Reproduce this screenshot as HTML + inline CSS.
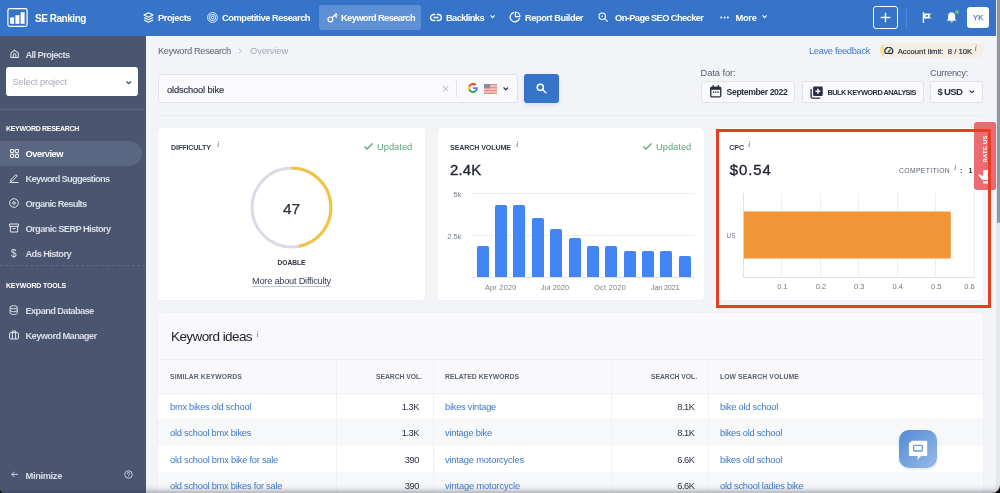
<!DOCTYPE html>
<html><head><meta charset="utf-8">
<style>
*{box-sizing:border-box;margin:0;padding:0}
html,body{width:1000px;height:493px;overflow:hidden;background:#f3f4f8;font-family:"Liberation Sans",sans-serif;color:#2b3040}
#main,#top,#side{will-change:transform}
.abs{position:absolute}
.nav,.sitem,.shead,.ctitle,.upd,.t,.th,.lnk,.num,.ax{margin-top:0.9px}
#top{position:absolute;left:0;top:0;width:1000px;height:36px;background:#3574c9}
#side{position:absolute;left:0;top:36px;width:145.6px;height:457px;background:#4a566f}
.nav{position:absolute;top:0;height:36px;line-height:35px;color:#fff;font-size:9.3px;font-weight:bold;white-space:nowrap;letter-spacing:-0.1px}
.sitem{position:absolute;left:25.5px;color:#d9dde8;font-size:9.3px;font-weight:bold;white-space:nowrap;letter-spacing:-0.1px}
.shead{position:absolute;left:6px;color:#fff;font-size:7px;font-weight:bold;white-space:nowrap}
.card{position:absolute;background:#fff;border-radius:4px;box-shadow:0 0 1.5px rgba(40,50,80,.07)}
.ctitle{position:absolute;font-size:7.1px;font-weight:bold;color:#363c4e;letter-spacing:0.1px;white-space:nowrap}
.upd{position:absolute;font-size:9.3px;color:#5fa27e;white-space:nowrap}
.btn{position:absolute;background:#fafafc;border:1px solid #dfe2e9;border-radius:3px}
.t{position:absolute;white-space:nowrap}
.th{position:absolute;font-size:6.8px;font-weight:bold;color:#5a6275;letter-spacing:0.25px;white-space:nowrap}
.lnk{position:absolute;font-size:9.3px;color:#3d78c9;white-space:nowrap}
.num{position:absolute;font-size:9.3px;color:#2b3040;white-space:nowrap;text-align:right;letter-spacing:-0.45px}
.ax{position:absolute;font-size:7.2px;color:#737a8a;white-space:nowrap}
i.inf{font-family:"Liberation Serif",serif;font-style:italic;font-size:7px;color:#6b7386;position:relative;top:-3px;margin-left:3px;font-weight:normal}
</style></head><body>

<div id="top">
  <!-- logo -->
  <svg class="abs" style="left:7px;top:8px" width="21" height="19" viewBox="0 0 21 19"><rect x="0.9" y="0.7" width="19.2" height="17.6" rx="1.8" fill="none" stroke="#fff" stroke-width="1.2"></rect><rect x="3.2" y="9.4" width="4" height="6.4" fill="#fff"></rect><rect x="8.4" y="7.2" width="4" height="8.6" fill="#fff"></rect><rect x="13.6" y="4.2" width="4" height="11.6" fill="#fff"></rect></svg>
  <div class="nav" style="left: 35px; font-size: 10px; letter-spacing: -0.46px;">SE Ranking</div>
  <!-- projects -->
  <svg class="abs" style="left:142.5px;top:12px" width="11" height="11.4" viewBox="0 0 11 11.4" fill="none" stroke="#fff" stroke-width="1.15" stroke-linejoin="round"><path d="M5.5 0.8 L10 3 L5.5 5.2 L1 3 Z"></path><path d="M1 5.6 L5.5 7.8 L10 5.6"></path><path d="M1 8.1 L5.5 10.3 L10 8.1"></path></svg>
  <div class="nav" style="left: 158px; letter-spacing: -0.46px;">Projects</div>
  <svg class="abs" style="left:207px;top:12px" width="11" height="11" viewBox="0 0 11 11" fill="none" stroke="#fff" stroke-width="0.9"><circle cx="5.5" cy="5.5" r="4.9"></circle><circle cx="5.5" cy="5.5" r="3.1"></circle><circle cx="5.5" cy="5.5" r="1.3"></circle></svg>
  <div class="nav" style="left: 222px; letter-spacing: -0.48px;">Competitive Research</div>
  <div class="abs" style="left:319px;top:5px;width:102px;height:25px;background:#5e90d6;border-radius:3px"></div>
  <svg class="abs" style="left:327px;top:12px" width="11" height="11" viewBox="0 0 11 11" fill="none" stroke="#fff" stroke-width="1.2" stroke-linecap="round"><circle cx="3.4" cy="7.4" r="2.4"></circle><path d="M5.2 5.6 L9.2 1.6 M7.6 3.2 L9.4 5 M8.9 1.9 L10.1 3.1"></path></svg>
  <div class="nav" style="left: 341px; letter-spacing: -0.61px;">Keyword Research</div>
  <svg class="abs" style="left:430px;top:13px" width="12" height="9" viewBox="0 0 12 9" fill="none" stroke="#fff" stroke-width="1.3" stroke-linecap="round"><path d="M4.8 1.5 H3.6 a3 3 0 0 0 0 6 H4.8 M7.2 1.5 H8.4 a3 3 0 0 1 0 6 H7.2 M4 4.5 H8"></path></svg>
  <div class="nav" style="left: 446px; letter-spacing: -0.6px;">Backlinks</div>
  <svg class="abs" style="left:489.6px;top:15.4px" width="5.2" height="3.7" viewBox="0 0 7 5" fill="none" stroke="#fff" stroke-width="1.5" stroke-linecap="round" stroke-linejoin="round"><path d="M1 1 L3.5 3.6 L6 1"></path></svg>
  <svg class="abs" style="left:509px;top:11px" width="12" height="12" viewBox="0 0 12 12" fill="none" stroke="#fff" stroke-width="1.2" stroke-linecap="round"><path d="M4.6 1.6 A4.7 4.7 0 1 0 10.4 7.4"></path><path d="M6.4 1 V5.6 H11 A4.6 4.6 0 0 0 6.4 1 Z" stroke-linejoin="round"></path></svg>
  <div class="nav" style="left: 525px; letter-spacing: -0.47px;">Report Builder</div>
  <svg class="abs" style="left:598.4px;top:11.6px" width="10.6" height="10.6" viewBox="0 0 12 12" fill="none" stroke="#fff" stroke-width="1.2" stroke-linecap="round"><circle cx="4.8" cy="4.8" r="3.7"></circle><path d="M7.6 7.6 L10.6 10.6"></path><circle cx="4.8" cy="4.8" r="0.9" fill="#fff" stroke="none"></circle></svg>
  <div class="nav" style="left: 615px; letter-spacing: -0.6px;">On-Page SEO Checker</div>
  <svg class="abs" style="left:720px;top:16px" width="10" height="3" viewBox="0 0 10 3" fill="#fff"><circle cx="1.3" cy="1.5" r="1"></circle><circle cx="4.6" cy="1.5" r="1"></circle><circle cx="7.9" cy="1.5" r="1"></circle></svg>
  <div class="nav" style="left: 735.4px; letter-spacing: -0.25px;">More</div>
  <svg class="abs" style="left:762px;top:15.4px" width="5.2" height="3.7" viewBox="0 0 7 5" fill="none" stroke="#fff" stroke-width="1.5" stroke-linecap="round" stroke-linejoin="round"><path d="M1 1 L3.5 3.6 L6 1"></path></svg>
  <!-- plus -->
  <div class="abs" style="left:873px;top:6px;width:25px;height:23px;border:1.3px solid #fff;border-radius:3px"></div>
  <svg class="abs" style="left:880px;top:12px" width="11" height="11" viewBox="0 0 11 11" stroke="#fff" stroke-width="1.4" stroke-linecap="round"><path d="M5.5 1.2 V9.8 M1.2 5.5 H9.8"></path></svg>
  <div class="abs" style="left:906px;top:7px;width:1px;height:21px;background:#5588d2"></div>
  <svg class="abs" style="left:922px;top:12px" width="10" height="11" viewBox="0 0 10 11"><path d="M1.4 0.8 V10.4" stroke="#fff" stroke-width="1.4" stroke-linecap="round"></path><path d="M2 1.4 H9 L7.4 3.9 L9 6.4 H2 Z" fill="#fff"></path><rect x="3.6" y="3.2" width="2.4" height="1.5" fill="#3574c9"></rect></svg>
  <svg class="abs" style="left:945.4px;top:8.6px" width="15.4" height="15.4" viewBox="0 0 14 14"><path d="M6 3 C3.8 3 2.8 4.8 2.8 6.8 V9 L1.6 10.6 H10.4 L9.2 9 V6.8 C9.2 4.8 8.2 3 6 3 Z" fill="#fff"></path><path d="M4.8 11.4 a1.3 1.3 0 0 0 2.4 0 Z" fill="#fff"></path><circle cx="10.9" cy="2.7" r="1.8" fill="#6fbf73"></circle></svg>
  <div class="abs" style="left:967.4px;top:6.7px;width:21.5px;height:21.4px;background:#fff;border-radius:3px;color:#3f7ccf;font-size:7.6px;-webkit-text-stroke:0.25px #3f7ccf;text-align:center;line-height:22.6px;letter-spacing:0.1px">YK</div>
</div>

<div id="side">
  <!-- positions relative to side top=36 -->
  <svg class="abs" style="left:9.8px;top:13.4px" width="9.2" height="9.6" viewBox="0 0 10 10" fill="none" stroke="#e1e5ee" stroke-width="1.1" stroke-linejoin="round"><path d="M1 4.2 L5 1 L9 4.2 V9 H1 Z"></path><path d="M3.6 9 V6.4 a1.4 1.4 0 0 1 2.8 0 V9"></path></svg>
  <div class="sitem" style="top: 13px; letter-spacing: -0.6px;">All Projects</div>
  <div class="abs" style="left:6px;top:31px;width:132px;height:29px;background:#fff;border-radius:3px"></div>
  <div class="t" style="left: 12.5px; top: 40.3px; font-size: 9.3px; color: rgb(164, 169, 182); letter-spacing: -0.13px;">Select project</div>
  <svg class="abs" style="left:125.6px;top:44.8px" width="5.4" height="3.9" viewBox="0 0 7 5" fill="none" stroke="#3a4257" stroke-width="1.5" stroke-linecap="round" stroke-linejoin="round"><path d="M1 1 L3.5 3.4 L6 1"></path></svg>
  <div class="abs" style="left:0;top:73px;width:145px;height:1px;background:#5a6680"></div>
  <div class="shead" style="top: 88px; letter-spacing: -0.3px;">KEYWORD RESEARCH</div>
  <div class="abs" style="left:0;top:105px;width:142px;height:25px;background:#5a6782;border-radius:0 13px 13px 0"></div>
  <svg class="abs" style="left:10px;top:113px" width="9" height="9" viewBox="0 0 9 9" fill="none" stroke="#fff" stroke-width="1"><rect x="0.5" y="0.5" width="3.2" height="3.2" rx="0.3"></rect><rect x="5.3" y="0.5" width="3.2" height="3.2" rx="0.3"></rect><rect x="0.5" y="5.3" width="3.2" height="3.2" rx="0.3"></rect><rect x="5.3" y="5.3" width="3.2" height="3.2" rx="0.3"></rect></svg>
  <div class="sitem" style="top: 112px; color: rgb(255, 255, 255); letter-spacing: -0.48px;">Overview</div>
  <svg class="abs" style="left:9px;top:137px" width="10" height="10" viewBox="0 0 10 10" fill="none" stroke="#e1e5ee" stroke-width="1" stroke-linecap="round" stroke-linejoin="round"><path d="M2 6.6 L6.8 1.6 L8.2 3 L3.4 8 L1.8 8.2 Z"></path><path d="M0.8 9.5 H9"></path></svg>
  <div class="sitem" style="top: 137px; letter-spacing: -0.72px;">Keyword Suggestions</div>
  <svg class="abs" style="left:9px;top:162px" width="10" height="10" viewBox="0 0 10 10" fill="none" stroke="#e1e5ee" stroke-width="1"><circle cx="5" cy="5" r="4.3"></circle><circle cx="5" cy="5" r="1.3"></circle></svg>
  <div class="sitem" style="top: 162px; letter-spacing: -0.69px;">Organic Results</div>
  <svg class="abs" style="left:9px;top:187px" width="10" height="10" viewBox="0 0 10 10" fill="none" stroke="#e1e5ee" stroke-width="1" stroke-linejoin="round"><rect x="0.6" y="1" width="8.8" height="2.4"></rect><path d="M1.4 3.4 V9 H8.6 V3.4"></path><path d="M3.8 5.6 H6.2" stroke-linecap="round"></path></svg>
  <div class="sitem" style="top: 187px; letter-spacing: -0.62px;">Organic SERP History</div>
  <div class="t" style="left:11px;top:211px;font-size:10px;color:#e1e5ee">$</div>
  <div class="sitem" style="top: 212px; letter-spacing: -0.61px;">Ads History</div>
  <div class="abs" style="left:0;top:229px;width:145px;height:0;border-top:1px dashed #5d6983"></div>
  <div class="shead" style="top: 245px; letter-spacing: -0.19px;">KEYWORD TOOLS</div>
  <svg class="abs" style="left:9.4px;top:269px" width="9.4" height="10.4" viewBox="0 0 10 11" fill="none" stroke="#e1e5ee" stroke-width="1"><ellipse cx="5" cy="2.4" rx="3.8" ry="1.7"></ellipse><path d="M1.2 2.4 V8.4 C1.2 9.4 2.9 10.1 5 10.1 S8.8 9.4 8.8 8.4 V2.4"></path><path d="M1.2 5.4 C1.2 6.4 2.9 7.1 5 7.1 S8.8 6.4 8.8 5.4"></path></svg>
  <div class="sitem" style="top: 269px; letter-spacing: -0.63px;">Expand Database</div>
  <svg class="abs" style="left:9px;top:294px" width="10" height="10" viewBox="0 0 10 10" fill="none" stroke="#e1e5ee" stroke-width="1" stroke-linejoin="round"><rect x="0.6" y="2.6" width="8.8" height="6.4" rx="0.8"></rect><path d="M3.4 2.6 V1 H6.6 V2.6 M3.4 2.6 V9 M6.6 2.6 V9"></path></svg>
  <div class="sitem" style="top: 294px; letter-spacing: -0.61px;">Keyword Manager</div>
  <svg class="abs" style="left:10.6px;top:435.4px" width="7.6" height="6.8" viewBox="0 0 9 8" fill="none" stroke="#e1e5ee" stroke-width="1" stroke-linecap="round" stroke-linejoin="round"><path d="M8.2 4 H1 M3.8 1.2 L1 4 L3.8 6.8"></path></svg>
  <div class="sitem" style="top: 434px; letter-spacing: -0.35px;">Minimize</div>
  <svg class="abs" style="left:124px;top:434.4px" width="9" height="9" viewBox="0 0 10 10" fill="none" stroke="#e1e5ee" stroke-width="0.9"><circle cx="5" cy="5" r="4.2"></circle><path d="M3.7 4 a1.3 1.3 0 1 1 1.9 1.1 c-.4.2-.6.4-.6.9" stroke-linecap="round"></path><circle cx="5" cy="7.4" r="0.5" fill="#e1e5ee" stroke="none"></circle></svg>
</div>

<div id="main">
  <div class="t" style="left: 158px; top: 45.5px; font-size: 9.3px; color: rgb(90, 98, 117); letter-spacing: -0.35px;">Keyword Research</div>
  <svg class="abs" style="left:238px;top:48px" width="5" height="6" viewBox="0 0 5 6" fill="none" stroke="#b5bac6" stroke-width="0.9"><path d="M1 0.8 L3.4 3 L1 5.2"></path></svg>
  <div class="t" style="left: 250px; top: 45.5px; font-size: 9.3px; color: rgb(162, 168, 181); letter-spacing: -0.09px;">Overview</div>
  <div class="t" style="left: 809px; top: 45px; font-size: 9.3px; color: rgb(61, 120, 201); letter-spacing: -0.33px;">Leave feedback</div>
  <div class="abs" style="left:880.2px;top:42.7px;width:103.8px;height:15.6px;background:linear-gradient(90deg,#f6dd92 0,#f6dd92 3.4px,#f4efe2 4.4px);border-radius:8px"></div>
  <svg class="abs" style="left:884px;top:47px" width="9.6" height="7.2" viewBox="0 0 9.6 7.2" fill="none" stroke="#2b3040" stroke-width="1.25" stroke-linecap="round" stroke-linejoin="round"><path d="M1.6 6.4 A3.9 3.9 0 1 1 8 6.4 Z"></path><path d="M4.6 4.6 L6.2 2.8"></path></svg>
  <div class="t" style="left: 897.7px; top: 46px; font-size: 7.7px; color: rgb(43, 48, 64); -webkit-text-stroke: 0.18px rgb(43, 48, 64); letter-spacing: 0.01px;">Account limit:&nbsp; 8 / 10K</div>
  <div class="t" style="left:974.6px;top:42.2px;font-size:8.6px;color:#5f677a;font-family:'Liberation Serif',serif;font-style:italic">i</div>

  <!-- search -->
  <div class="abs" style="left:158px;top:74px;width:360px;height:29px;background:#fafafc;border:1px solid #dfe2e9;border-radius:3px"></div>
  <div class="t" style="left: 167px; top: 83.8px; font-size: 9.3px; color: rgb(43, 48, 64); -webkit-text-stroke: 0.15px rgb(43, 48, 64); letter-spacing: -0.14px;">oldschool bike</div>
  <svg class="abs" style="left:441.8px;top:85px" width="7.4" height="7.4" viewBox="0 0 7 7" stroke="#a2a7b4" stroke-width="0.85"><path d="M1 1 L6 6 M6 1 L1 6"></path></svg>
  <div class="abs" style="left:456.4px;top:80px;width:1px;height:17px;background:#e0e2e9"></div>
  <svg class="abs" style="left:468px;top:83px" width="10" height="10" viewBox="0 0 48 48"><path fill="#EA4335" d="M24 9.5c3.54 0 6.71 1.22 9.21 3.6l6.85-6.85C35.9 2.38 30.47 0 24 0 14.62 0 6.51 5.38 2.56 13.22l7.98 6.19C12.43 13.72 17.74 9.5 24 9.5z"></path><path fill="#4285F4" d="M46.98 24.55c0-1.57-.15-3.09-.38-4.55H24v9.02h12.94c-.58 2.96-2.26 5.48-4.78 7.18l7.73 6c4.51-4.18 7.09-10.36 7.09-17.65z"></path><path fill="#FBBC05" d="M10.53 28.59c-.48-1.45-.76-2.99-.76-4.59s.27-3.14.76-4.59l-7.98-6.19C.92 16.46 0 20.12 0 24c0 3.88.92 7.54 2.56 10.78l7.97-6.19z"></path><path fill="#34A853" d="M24 48c6.48 0 11.93-2.13 15.89-5.81l-7.73-6c-2.15 1.45-4.92 2.3-8.16 2.3-6.26 0-11.57-4.22-13.47-9.91l-7.98 6.19C6.51 42.62 14.62 48 24 48z"></path></svg>
  <svg class="abs" style="left:484px;top:84px" width="13" height="10" viewBox="0 0 13 10"><rect width="13" height="10" fill="#f3cfcb"></rect><rect y="0" width="13" height="1.4" fill="#e58f88"></rect><rect y="2.9" width="13" height="1.4" fill="#e58f88"></rect><rect y="5.8" width="13" height="1.4" fill="#e58f88"></rect><rect y="8.6" width="13" height="1.4" fill="#e58f88"></rect><rect width="6" height="4.4" fill="#868c9d"></rect></svg>
  <svg class="abs" style="left:502.6px;top:86.8px" width="5.6" height="4" viewBox="0 0 7 5" fill="none" stroke="#2b3040" stroke-width="1.5" stroke-linecap="round" stroke-linejoin="round"><path d="M1 1 L3.5 3.4 L6 1"></path></svg>
  <div class="abs" style="left:524.4px;top:74.3px;width:34.4px;height:29px;background:#3574c9;border-radius:3px;box-shadow:0 2px 4px rgba(53,116,201,.15)"></div>
  <svg class="abs" style="left:536px;top:83px" width="11" height="11" viewBox="0 0 11 11" fill="none" stroke="#fff" stroke-width="1.5" stroke-linecap="round"><circle cx="4.3" cy="4.3" r="3.1"></circle><path d="M6.8 6.8 L9.8 9.8"></path></svg>

  <div class="t" style="left: 700.6px; top: 67.6px; font-size: 9.3px; color: rgb(85, 93, 112); letter-spacing: -0.07px;">Data for:</div>
  <div class="btn" style="left:701px;top:80.5px;width:94px;height:22.3px"></div>
  <svg class="abs" style="left:710px;top:85.4px" width="11.5" height="12.6" viewBox="0 0 11 12"><rect x="0.7" y="2" width="9.6" height="9.3" rx="1.2" fill="none" stroke="#2b3040" stroke-width="1.3"></rect><rect x="0.7" y="2" width="9.6" height="2.6" fill="#2b3040"></rect><path d="M3 0.6 V2.4 M8 0.6 V2.4" stroke="#2b3040" stroke-width="1.3" stroke-linecap="round"></path><rect x="2.8" y="6.2" width="1.3" height="1.3" fill="#2b3040"></rect><rect x="4.9" y="6.2" width="1.3" height="1.3" fill="#2b3040"></rect><rect x="7" y="6.2" width="1.3" height="1.3" fill="#2b3040"></rect></svg>
  <div class="t" style="left: 726.6px; top: 86.4px; font-size: 8.7px; color: rgb(43, 48, 64); font-weight: bold; letter-spacing: -0.42px;">September 2022</div>
  <div class="btn" style="left:801.5px;top:80.5px;width:122px;height:22.3px"></div>
  <svg class="abs" style="left:810px;top:85.6px" width="13.2" height="13.2" viewBox="0 0 12 12"><rect x="2.8" y="0.4" width="8.8" height="8.8" rx="1.2" fill="#2b3040"></rect><path d="M7.2 2.6 V7 M5 4.8 H9.4" stroke="#fff" stroke-width="1.3"></path><path d="M1 3 V10 a1 1 0 0 0 1 1 H9" fill="none" stroke="#2b3040" stroke-width="1.2" stroke-linecap="round"></path></svg>
  <div class="t" style="left: 827.4px; top: 87.2px; font-size: 7.4px; color: rgb(43, 48, 64); font-weight: bold; letter-spacing: -0.53px;">BULK KEYWORD ANALYSIS</div>
  <div class="t" style="left: 930px; top: 67.6px; font-size: 9.3px; color: rgb(85, 93, 112); letter-spacing: -0.26px;">Currency:</div>
  <div class="btn" style="left:930px;top:80.5px;width:53px;height:22.3px"></div>
  <div class="t" style="left: 937.5px; top: 85.2px; font-size: 9.6px; color: rgb(43, 48, 64); font-weight: bold; letter-spacing: -0.69px;">$ USD</div>
  <svg class="abs" style="left:968.7px;top:90px" width="5.6" height="4" viewBox="0 0 7 5" fill="none" stroke="#2b3040" stroke-width="1.4" stroke-linecap="round" stroke-linejoin="round"><path d="M1 1 L3.5 3.4 L6 1"></path></svg>
  <div class="abs" style="left:158px;top:115px;width:825px;height:1px;background:#e9ebf0"></div>

  <!-- card 1 -->
  <div class="card" style="left:158px;top:128px;width:267px;height:172px"></div>
  <div class="ctitle" style="left: 171px; top: 143px; letter-spacing: -0.09px;">DIFFICULTY</div>
  <div class="t" style="left:217px;top:138.2px;font-size:8.6px;color:#5f677a;font-family:'Liberation Serif',serif;font-style:italic">i</div>
  <svg class="abs" style="left:364px;top:143px" width="9" height="7" viewBox="0 0 9 7" fill="none" stroke="#5aa57a" stroke-width="1.25" stroke-linecap="round" stroke-linejoin="round"><path d="M0.8 3.8 L3 6 L8.2 0.8"></path></svg>
  <div class="upd" style="left: 377px; top: 141px; letter-spacing: 0.02px;">Updated</div>
  <svg class="abs" style="left:248px;top:164px" width="87" height="87" viewBox="0 0 87 87" fill="none"><circle cx="43.5" cy="43.5" r="39.5" stroke="#d9dce5" stroke-width="3"></circle><path d="M43.5 4 A39.5 39.5 0 0 1 50.9 82.3" stroke="#f2c341" stroke-width="3"></path></svg>
  <div class="t" style="left:271px;top:199px;width:41px;text-align:center;font-size:15.5px;color:#2b3040;-webkit-text-stroke:0.25px #2b3040">47</div>
  <div class="t" style="left:271px;top:258px;width:41px;text-align:center;font-size:6.6px;font-weight:bold;color:#2b3040">DOABLE</div>
  <div class="t" style="left: 252px; top: 275px; font-size: 9.3px; color: rgb(58, 66, 87); border-bottom: 1px solid rgb(195, 199, 209); line-height: 10.4px; letter-spacing: -0.27px;">More about Difficulty</div>

  <!-- card 2 -->
  <div class="card" style="left:438px;top:128px;width:266px;height:172px"></div>
  <div class="ctitle" style="left: 450px; top: 143px; letter-spacing: -0.1px;">SEARCH VOLUME</div>
  <div class="t" style="left:516px;top:138.2px;font-size:8.6px;color:#5f677a;font-family:'Liberation Serif',serif;font-style:italic">i</div>
  <svg class="abs" style="left:643px;top:143px" width="9" height="7" viewBox="0 0 9 7" fill="none" stroke="#5aa57a" stroke-width="1.25" stroke-linecap="round" stroke-linejoin="round"><path d="M0.8 3.8 L3 6 L8.2 0.8"></path></svg>
  <div class="upd" style="left: 656px; top: 141px; letter-spacing: 0.02px;">Updated</div>
  <div class="t" style="left: 450px; top: 161.6px; font-size: 14.9px; color: rgb(32, 36, 47); -webkit-text-stroke: 0.35px rgb(32, 36, 47); letter-spacing: 0.21px;">2.4K</div>
  <div class="abs" style="left:471.5px;top:193px;width:223.5px;height:1px;background:#eceef3"></div>
  <div class="abs" style="left:471.5px;top:235px;width:223.5px;height:1px;background:#eceef3"></div>
  <div class="abs" style="left:471.5px;top:276.5px;width:223.5px;height:1px;background:#dde1ea"></div>
  <div class="ax" style="left:431.5px;top:189.6px;width:30px;text-align:right;font-size:7.5px">5k</div>
  <div class="ax" style="left:431.5px;top:231.6px;width:30px;text-align:right;font-size:7.5px">2.5k</div>
  <div class="abs" style="left:476.6px;top:245.9px;width:12px;height:31.1px;background:#4285f4;border-radius:1.7px 1.7px 0 0"></div>
  <div class="abs" style="left:495.0px;top:204.7px;width:12px;height:72.3px;background:#4285f4;border-radius:1.7px 1.7px 0 0"></div>
  <div class="abs" style="left:513.3px;top:204.7px;width:12px;height:72.3px;background:#4285f4;border-radius:1.7px 1.7px 0 0"></div>
  <div class="abs" style="left:531.7px;top:218.2px;width:12px;height:58.8px;background:#4285f4;border-radius:1.7px 1.7px 0 0"></div>
  <div class="abs" style="left:550.1px;top:229.4px;width:12px;height:47.6px;background:#4285f4;border-radius:1.7px 1.7px 0 0"></div>
  <div class="abs" style="left:568.5px;top:238.2px;width:12px;height:38.8px;background:#4285f4;border-radius:1.7px 1.7px 0 0"></div>
  <div class="abs" style="left:586.8px;top:245.9px;width:12px;height:31.1px;background:#4285f4;border-radius:1.7px 1.7px 0 0"></div>
  <div class="abs" style="left:605.2px;top:245.9px;width:12px;height:31.1px;background:#4285f4;border-radius:1.7px 1.7px 0 0"></div>
  <div class="abs" style="left:623.6px;top:251.3px;width:12px;height:25.7px;background:#4285f4;border-radius:1.7px 1.7px 0 0"></div>
  <div class="abs" style="left:641.9px;top:251.3px;width:12px;height:25.7px;background:#4285f4;border-radius:1.7px 1.7px 0 0"></div>
  <div class="abs" style="left:660.3px;top:251.3px;width:12px;height:25.7px;background:#4285f4;border-radius:1.7px 1.7px 0 0"></div>
  <div class="abs" style="left:678.7px;top:255.9px;width:12px;height:21.1px;background:#4285f4;border-radius:1.7px 1.7px 0 0"></div>
  <div class="ax" style="left: 485px; top: 282.3px; letter-spacing: 0.29px;">Apr 2020</div>
  <div class="ax" style="left: 541px; top: 282.3px; letter-spacing: 0.13px;">Jul 2020</div>
  <div class="ax" style="left: 594.2px; top: 282.3px; letter-spacing: 0.33px;">Oct 2020</div>
  <div class="ax" style="left: 651px; top: 282.3px; letter-spacing: -0.15px;">Jan 2021</div>

  <!-- card 3 -->
  <div class="card" style="left:717px;top:128px;width:266px;height:172px"></div>
  <div class="ctitle" style="left: 729.2px; top: 143px; letter-spacing: 0.01px;">CPC</div>
  <div class="t" style="left:748px;top:138.2px;font-size:8.6px;color:#5f677a;font-family:'Liberation Serif',serif;font-style:italic">i</div>
  <div class="t" style="left: 729.8px; top: 161.6px; font-size: 14.9px; color: rgb(32, 36, 47); -webkit-text-stroke: 0.35px rgb(32, 36, 47); letter-spacing: 0.95px;">$0.54</div>
  <div class="t" style="left: 899px; top: 166px; font-size: 6.8px; color: rgb(90, 98, 117); letter-spacing: 0.35px;">COMPETITION</div>
  <div class="t" style="left:954px;top:161.2px;font-size:8.6px;color:#5f677a;font-family:'Liberation Serif',serif;font-style:italic">i</div>
  <div class="t" style="left:960px;top:165px;font-size:7.5px;color:#2b3040;font-weight:bold">:</div>
  <div class="t" style="left:968.6px;top:166px;font-size:7px;color:#2b3040;font-weight:bold">1</div>
  <div class="abs" style="left:743.0px;top:193px;width:1px;height:84px;background:#dfe2ea"></div>
<div class="abs" style="left:781.4px;top:193px;width:1px;height:84px;background:#eceef3"></div>
<div class="abs" style="left:819.8px;top:193px;width:1px;height:84px;background:#eceef3"></div>
<div class="abs" style="left:858.3px;top:193px;width:1px;height:84px;background:#eceef3"></div>
<div class="abs" style="left:896.7px;top:193px;width:1px;height:84px;background:#eceef3"></div>
<div class="abs" style="left:935.1px;top:193px;width:1px;height:84px;background:#eceef3"></div>
<div class="abs" style="left:973.5px;top:193px;width:1px;height:84px;background:#eceef3"></div>
<div class="abs" style="left:743px;top:276.5px;width:231.5px;height:1px;background:#dde3ee"></div>
<svg class="abs" style="left:740px;top:205px" width="220" height="60" viewBox="740 205 220 60"><path d="M743.8 211.5 H949.6 a1.2 1.2 0 0 1 1.2 1.2 V257.4 a1.2 1.2 0 0 1 -1.2 1.2 H743.8 Z" fill="#f09538"></path></svg>

  <div class="ax" style="left:726.6px;top:231.6px;font-size:6.4px">US</div>
  <div class="ax" style="left:767.5px;top:281.4px;width:30px;text-align:center;font-size:7.5px">0.1</div>
  <div class="ax" style="left:805.9px;top:281.4px;width:30px;text-align:center;font-size:7.5px">0.2</div>
  <div class="ax" style="left:844.3px;top:281.4px;width:30px;text-align:center;font-size:7.5px">0.3</div>
  <div class="ax" style="left:882.7px;top:281.4px;width:30px;text-align:center;font-size:7.5px">0.4</div>
  <div class="ax" style="left:921.2px;top:281.4px;width:30px;text-align:center;font-size:7.5px">0.5</div>
  <div class="ax" style="left:944.8px;top:281.4px;width:30px;text-align:right;font-size:7.5px">0.6</div>
  <!-- rate us -->
  <div class="abs" style="left:974.3px;top:122.3px;width:21.8px;height:67.8px;background:#ea6b71;border-radius:3px 2px 2px 3px"></div>
  <div class="t" style="left:962.8px;top:144.8px;width:44px;text-align:center;font-size:5.9px;font-weight:bold;color:#fff;letter-spacing:.25px;transform:rotate(-90deg)">RATE US</div>
  <svg class="abs" style="left:976px;top:168px" width="16" height="18" viewBox="976 168 16 18" fill="#fff"><path d="M983.2 171 a0.9 0.9 0 0 1 0.9 -0.9 H988.6 a1 1 0 0 1 1 1 V179.2 a0.9 0.9 0 0 1 -0.9 0.9 H982.6 L978.5 175.6 C978 175 978.8 174 979.6 174.4 L983.2 176.2 Z"></path><rect x="983" y="181.3" width="6.4" height="2.2" rx="0.3"></rect></svg>
  <div class="abs" style="left:716.4px;top:129px;width:274.3px;height:178.7px;border:3px solid #e73d22"></div>

  <!-- keyword ideas -->
  <div class="card" style="left:158px;top:313px;width:825px;height:200px;background:#f9f9fb"></div>
  <div class="t" style="left: 171px; top: 328.3px; font-size: 13.5px; color: rgb(32, 36, 47); letter-spacing: -0.58px;">Keyword ideas</div>
  <div class="t" style="left:256.5px;top:329.6px;font-size:7.6px;color:#5f677a;font-family:'Liberation Serif',serif;font-style:italic">i</div>
  <div class="abs" style="left:158px;top:359px;width:825px;height:1px;background:#eceef3"></div>
<div class="abs" style="left:158px;top:393.0px;width:825px;height:26.6px;background:#fff"></div>
<div class="abs" style="left:158px;top:419.3px;width:825px;height:27px;background:#f7f8fa"></div>
<div class="abs" style="left:158px;top:446px;width:825px;height:26.6px;background:#fff"></div>
<div class="abs" style="left:158px;top:472px;width:825px;height:26.6px;background:#f7f8fa"></div>
<div class="abs" style="left:158px;top:393px;width:825px;height:1px;background:#eceef3"></div>
<div class="abs" style="left:336.0px;top:359px;width:1px;height:140px;background:#f0f1f5"></div>
<div class="abs" style="left:432.5px;top:359px;width:1px;height:140px;background:#f0f1f5"></div>
<div class="abs" style="left:611.0px;top:359px;width:1px;height:140px;background:#f0f1f5"></div>
<div class="abs" style="left:707.5px;top:359px;width:1px;height:140px;background:#f0f1f5"></div>
<div class="th" style="left: 170px; top: 372px; letter-spacing: 0.13px;">SIMILAR KEYWORDS</div>
<div class="th" style="left: 376px; top: 372px; letter-spacing: -0.04px;">SEARCH VOL.</div>
<div class="th" style="left: 445px; top: 372px; letter-spacing: 0.03px;">RELATED KEYWORDS</div>
<div class="th" style="left: 651px; top: 372px; letter-spacing: -0.04px;">SEARCH VOL.</div>
<div class="th" style="left: 720px; top: 372px; letter-spacing: 0.09px;">LOW SEARCH VOLUME</div>
<div class="lnk" style="left: 170px; top: 401px; letter-spacing: -0.26px;">bmx bikes old school</div>
<div class="num" style="left:369px;width:50px;top:401.0px">1.3K</div>
<div class="lnk" style="left: 445px; top: 401px; letter-spacing: -0.25px;">bikes vintage</div>
<div class="num" style="left:644.5px;width:50px;top:401.0px">8.1K</div>
<div class="lnk" style="left: 720px; top: 401px; letter-spacing: -0.23px;">bike old school</div>
<div class="lnk" style="left: 170px; top: 427.5px; letter-spacing: -0.26px;">old school bmx bikes</div>
<div class="num" style="left:369px;width:50px;top:427.5px">1.3K</div>
<div class="lnk" style="left: 445px; top: 427.5px; letter-spacing: -0.22px;">vintage bike</div>
<div class="num" style="left:644.5px;width:50px;top:427.5px">8.1K</div>
<div class="lnk" style="left: 720px; top: 427.5px; letter-spacing: -0.26px;">bikes old school</div>
<div class="lnk" style="left: 170px; top: 454px; letter-spacing: -0.24px;">old school bmx bike for sale</div>
<div class="num" style="left:369px;width:50px;top:454.0px">390</div>
<div class="lnk" style="left: 445px; top: 454px; letter-spacing: -0.17px;">vintage motorcycles</div>
<div class="num" style="left:644.5px;width:50px;top:454.0px">6.6K</div>
<div class="lnk" style="left: 720px; top: 454px; letter-spacing: -0.26px;">bikes old school</div>
<div class="lnk" style="left: 170px; top: 480px; letter-spacing: -0.25px;">old school bmx bikes for sale</div>
<div class="num" style="left:369px;width:50px;top:480.0px">390</div>
<div class="lnk" style="left: 445px; top: 480px; letter-spacing: -0.14px;">vintage motorcycle</div>
<div class="num" style="left:644.5px;width:50px;top:480.0px">6.6K</div>
<div class="lnk" style="left: 720px; top: 480px; letter-spacing: -0.24px;">old school ladies bike</div>


  <!-- scrollbar -->
  <div class="abs" style="left:996.3px;top:0;width:4px;height:493px;background:#e6e7ec"></div>
  <div class="abs" style="left:996.6px;top:0;width:3.4px;height:223px;background:#9197a3;border-radius:0 0 1.5px 1.5px"></div>
  <!-- chat -->
  <div class="abs" style="left:899.4px;top:430.3px;width:37.8px;height:37.8px;border-radius:10px;background:linear-gradient(135deg,#5a8fd8 10%,#94b7e6 95%);box-shadow:0 1px 3px rgba(60,90,150,.18)"></div>
  <svg class="abs" style="left:905px;top:437px" width="26" height="26" viewBox="905 437 26 26"><path d="M911.8 440.7 H926.2 a1 1 0 0 1 1 1 V455 a1 1 0 0 1 -1 1 H921 L917.6 459.8 V456 H909.9 a1 1 0 0 1 -1 -1 V443.6 Z" fill="#fff"></path><rect x="913.6" y="445.4" width="8.8" height="5.6" rx="0.9" fill="none" stroke="#6c9bdc" stroke-width="1.3"></rect></svg>
  <!-- corners -->
  <div class="abs" style="left:146px;top:484px;width:854px;height:9px;background:linear-gradient(to bottom,rgba(30,35,50,0),rgba(30,35,50,.05) 45%,rgba(30,35,50,.3))"></div>
  <div class="abs" style="left:0;top:488px;width:146px;height:5px;background:linear-gradient(to bottom,rgba(20,25,40,0),rgba(20,25,40,.12))"></div>
  <svg class="abs" style="left:0;top:489px" width="4" height="4" viewBox="0 0 4 4"><path d="M0 0 V4 H4 A4 4 0 0 1 0 0 Z" fill="#000"></path></svg>
  <svg class="abs" style="left:992px;top:485px" width="8" height="8" viewBox="0 0 8 8"><path d="M8 0 V8 H0 A8 8 0 0 0 8 0 Z" fill="#0a0a0e"></path></svg>
</div>


</body></html>
